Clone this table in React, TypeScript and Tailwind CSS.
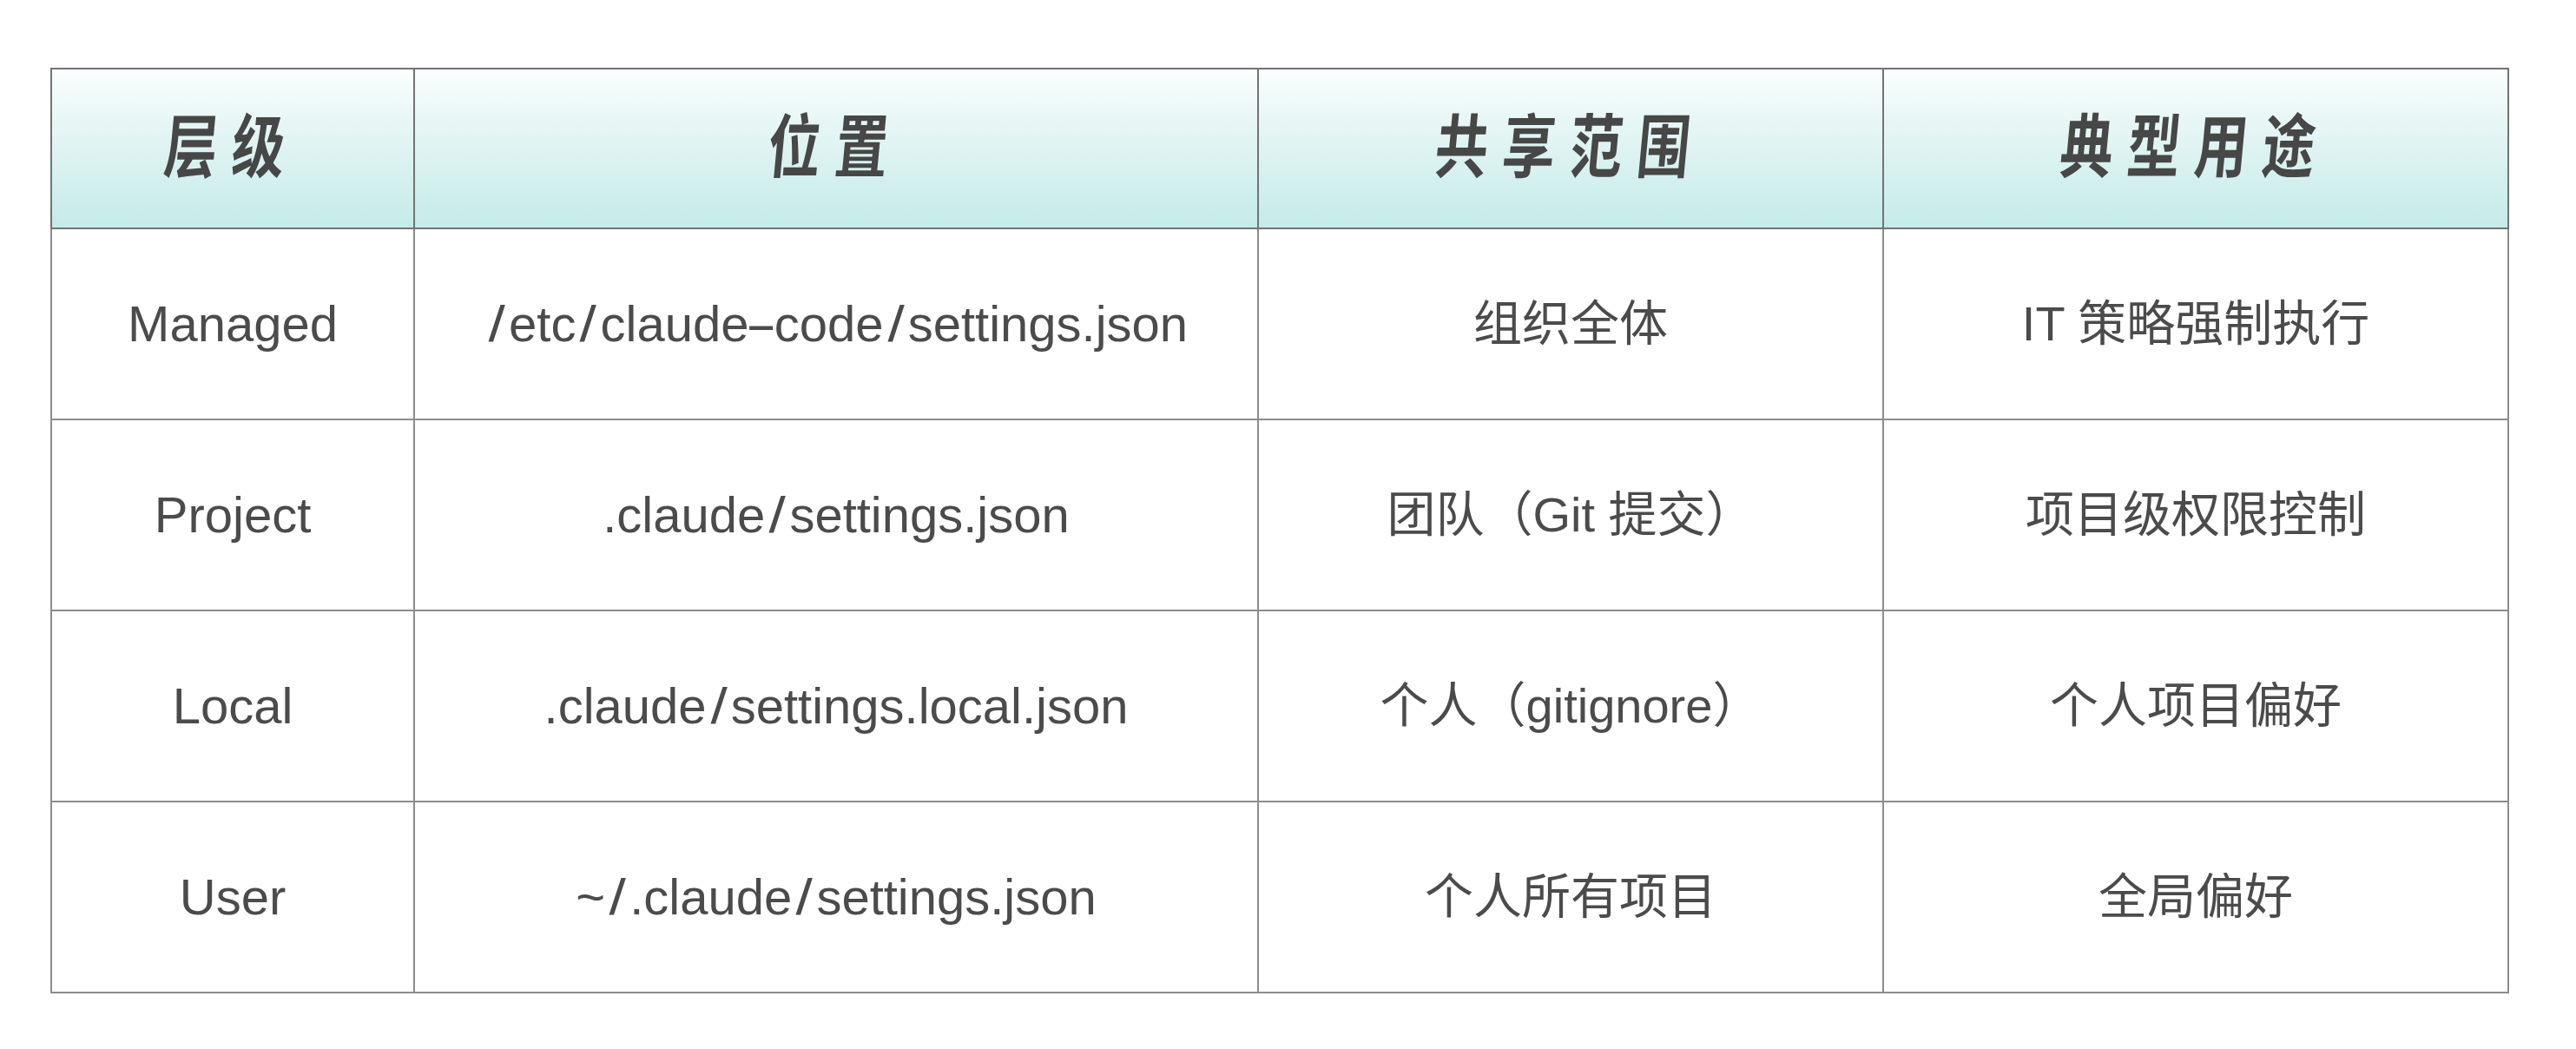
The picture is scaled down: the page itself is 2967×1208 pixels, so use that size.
const headers = ["层级", "位置", "共享范围", "典型用途"];

const rows = [
  ["Managed", "/etc/claude-code/settings.json", "组织全体", "IT 策略强制执行"],
  ["Project", ".claude/settings.json", "团队（Git 提交）", "项目级权限控制"],
  ["Local", ".claude/settings.local.json", "个人（gitignore）", "个人项目偏好"],
  ["User", "~/.claude/settings.json", "个人所有项目", "全局偏好"],
];

// the source font draws slashes and dashes wider than Arial does
function PathText({ text }: { text: string }) {
  const parts = text.split(/([/-])/);
  return (
    <>
      {parts.map((p, i) =>
        p === "/" ? (
          <span key={i} className="mx-[6px] inline-block scale-x-[1.2]">
            /
          </span>
        ) : p === "-" ? (
          <span key={i} className="mx-[5px] inline-block scale-x-[1.9]">
            -
          </span>
        ) : (
          <span key={i}>{p}</span>
        )
      )}
    </>
  );
}

export default function App() {
  return (
    <main className="min-h-screen bg-white pl-[58px] pt-[78px]">
      <table className="w-[2830px] table-fixed border-collapse text-[#4b4b4b] [font-family:'Liberation_Sans','Noto_Sans_CJK_SC',sans-serif]">
        <colgroup>
          <col className="w-[418px]" />
          <col className="w-[972px]" />
          <col className="w-[720px]" />
          <col className="w-[720px]" />
        </colgroup>
        <thead>
          <tr className="bg-[linear-gradient(180deg,#fbfefe_0%,#e6f6f5_35%,#c4ebe8_100%)]">
            {headers.map((h) => (
              <th
                key={h}
                className="h-[184px] border-2 border-[#737373] p-0 pb-[14px] text-center align-middle"
              >
                <span className="inline-block -skew-x-[7deg] scale-x-[0.76] text-[80px] font-bold leading-none tracking-[22px] text-[#474747] [font-family:'Noto_Sans_CJK_SC',sans-serif]">
                  {h}
                </span>
              </th>
            ))}
          </tr>
        </thead>
        <tbody>
          {rows.map((r) => (
            <tr key={r[0]}>
              {r.map((c, i) => (
                <td
                  key={i}
                  className={`h-[220px] border-2 border-[#8c8c8c] p-0 text-center align-middle leading-none ${
                    i < 2 ? "text-[58px]" : "text-[56px]"
                  }`}
                >
                  {i === 1 ? <PathText text={c} /> : c}
                </td>
              ))}
            </tr>
          ))}
        </tbody>
      </table>
    </main>
  );
}
